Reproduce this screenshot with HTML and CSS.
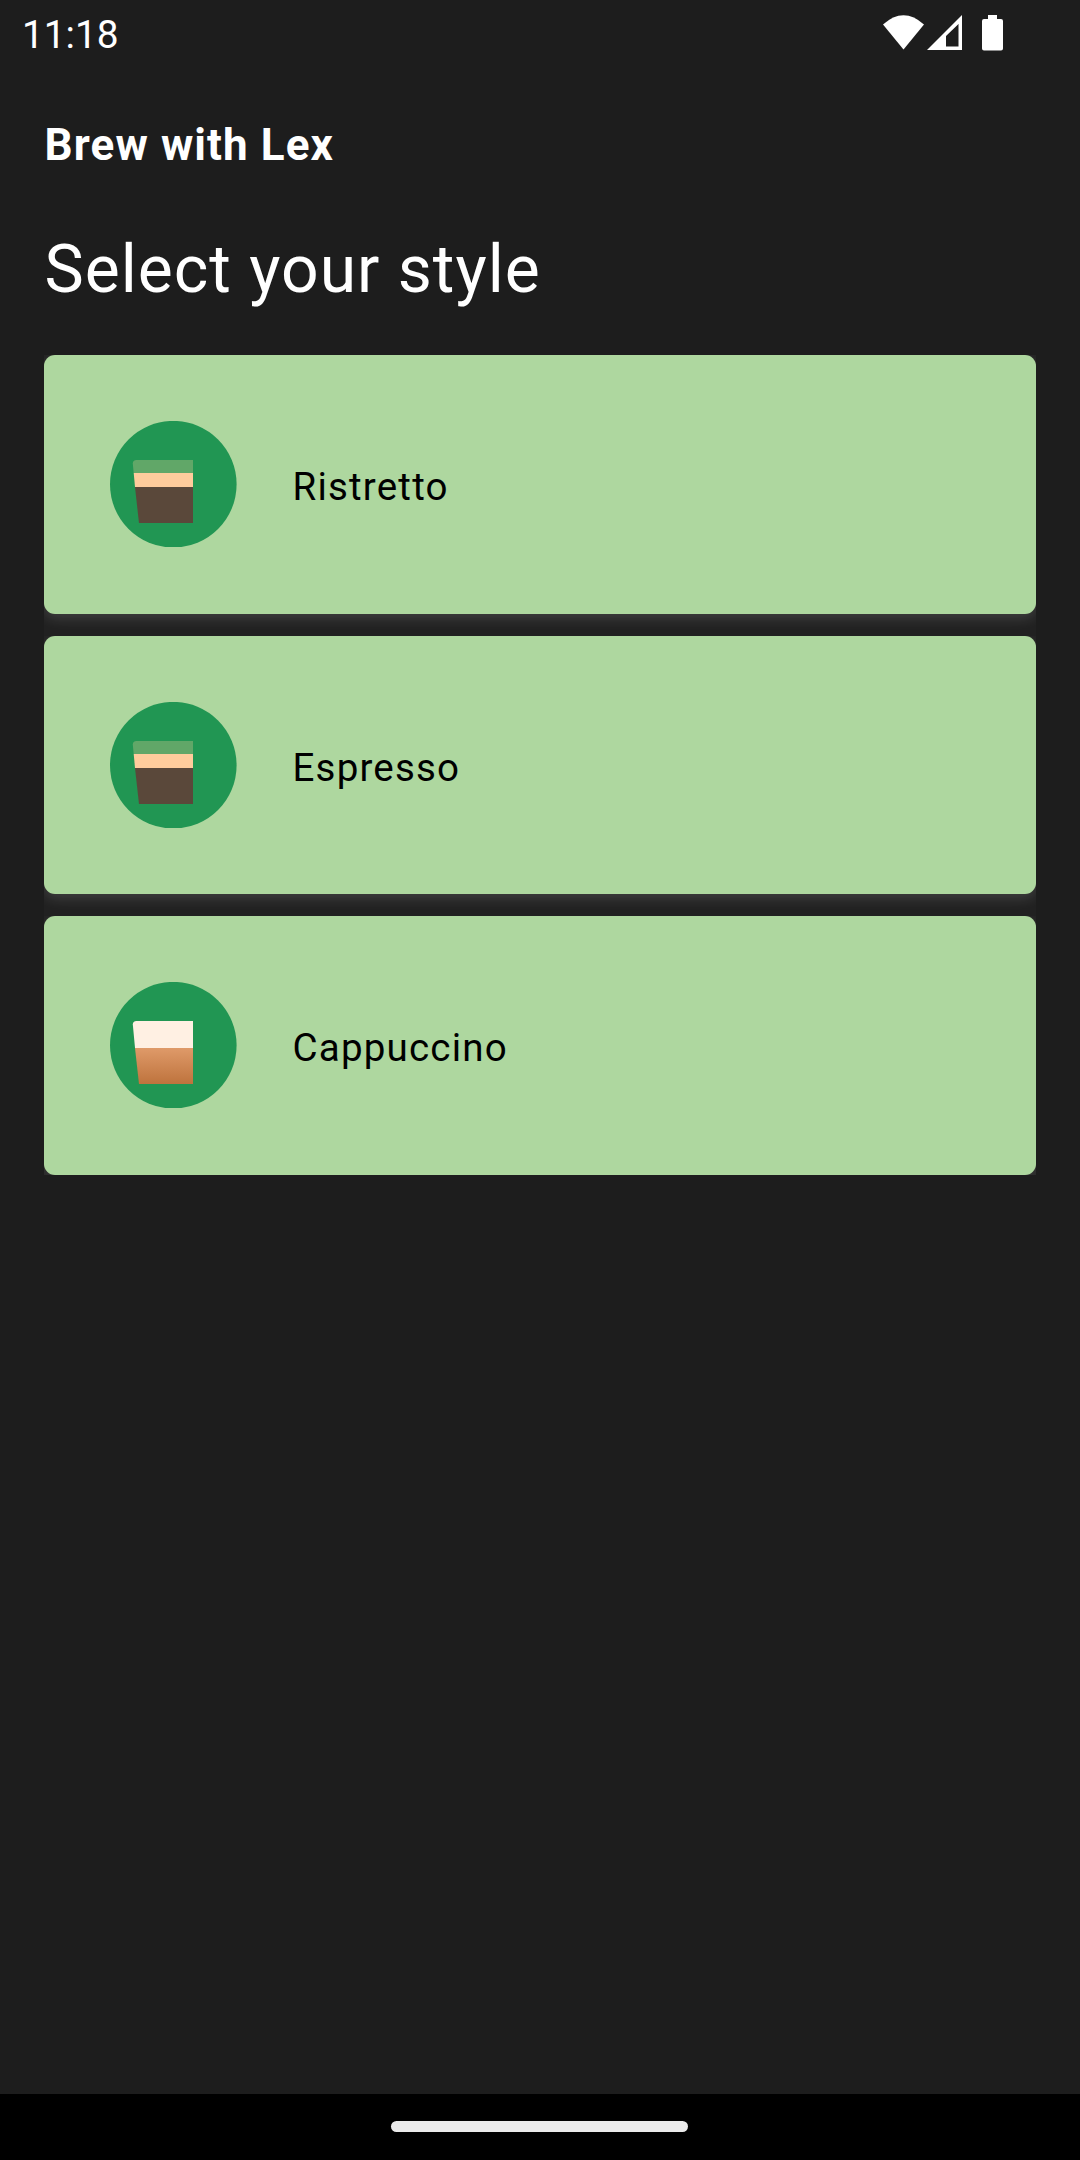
FILE: index.html
```html
<!DOCTYPE html>
<html lang="en">
<head>
<meta charset="utf-8">
<title>Brew with Lex</title>
<link rel="stylesheet" href="styles.css">
</head>
<body>
<div class="screen">
  <header class="status-bar">
    <span class="clock">11:18</span>
    <svg class="status-icons" width="124" height="40" viewBox="880 13 124 40" fill="#fff">
      <path d="M883 24.5Q903.5 6 924 24.5L903.5 49.5Z"/>
      <path fill-rule="evenodd" d="M962 15V50H927ZM958.5 24L946 36V46.5H958.5Z"/>
      <path d="M988 15h9v4h4a2 2 0 0 1 2 2v27.500a2 2 0 0 1-2 2h-17a2 2 0 0 1-2-2v-27.500a2 2 0 0 1 2-2h4z"/>
    </svg>
  </header>
  <main class="content">
    <div class="app-name">Brew with Lex</div>
    <h1 class="heading">Select your style</h1>
    <ul class="styles">
      <li class="card-slot"><div class="card">
        <svg class="cup" width="127" height="126" viewBox="0 0 127 126">
          <circle cx="63.300" cy="63.200" r="63.300" fill="#219653"/>
          <path d="M26.500 39H83V52H23.700L22.800 42.500Q22.800 39 26.500 39Z" fill="#61a768"/>
          <path d="M23.700 52H83V66H25Z" fill="#ffcc9c"/>
          <path d="M25 66H83V102H29Z" fill="#5a483a"/>
        </svg>
        <span class="label">Ristretto</span>
      </div></li>
      <li class="card-slot"><div class="card">
        <svg class="cup" width="127" height="126" viewBox="0 0 127 126">
          <circle cx="63.300" cy="63.200" r="63.300" fill="#219653"/>
          <path d="M26.500 39H83V52H23.700L22.800 42.500Q22.800 39 26.500 39Z" fill="#61a768"/>
          <path d="M23.700 52H83V66H25Z" fill="#ffcc9c"/>
          <path d="M25 66H83V102H29Z" fill="#5a483a"/>
        </svg>
        <span class="label">Espresso</span>
      </div></li>
      <li class="card-slot"><div class="card">
        <svg class="cup" width="127" height="126" viewBox="0 0 127 126">
          <defs><linearGradient id="coffee" x1="0" y1="0" x2="0" y2="1">
            <stop offset="0" stop-color="#df9a69"/><stop offset="1" stop-color="#be733d"/>
          </linearGradient></defs>
          <circle cx="63.300" cy="63.200" r="63.300" fill="#219653"/>
          <path d="M26.500 39H83V66H25L22.800 42.500Q22.800 39 26.500 39Z" fill="#fff0e3"/>
          <path d="M25 66H83V102H29Z" fill="url(#coffee)"/>
        </svg>
        <span class="label">Cappuccino</span>
      </div></li>
    </ul>
  </main>
  <footer class="nav-bar"><div class="handle"></div></footer>
</div>
</body>
</html>
```
FILE: styles.css
```css
body {
  margin: 0;
  background: #1d1d1d;
  font-family: Roboto, "Liberation Sans", sans-serif;
}
.screen {
  width: 1080px;
  height: 2160px;
  display: flex;
  flex-direction: column;
  background: #1d1d1d;
  color: #fff;
}
.status-bar {
  box-sizing: border-box;
  height: 66px;
  padding: 13px 76px 0 22px;
  display: flex;
  justify-content: space-between;
  align-items: flex-start;
}
.clock {
  font-size: 38.8px;
  line-height: 43px;
}
.status-icons {
  display: block;
}
.content {
  flex: 1;
  padding: 54px 44px 0;
}
.app-name {
  padding-left: 0.6px;
  font-size: 44px;
  font-weight: 700;
  line-height: 50px;
  letter-spacing: 1.100px;
}
.heading {
  margin: 60px 0 0;
  padding-left: 0.5px;
  font-size: 66px;
  font-weight: 400;
  line-height: 80px;
  letter-spacing: 1px;
}
.styles {
  margin: 45.2px 0 0;
  padding: 0;
  list-style: none;
  display: flex;
  flex-direction: column;
}
/* Each slot clips its card's glow to the list row. */
.card-slot {
  overflow: hidden;
  height: 280.5px;
  background: #212121;
}
.card-slot:last-child {
  height: 258.5px;
}
.card {
  box-sizing: border-box;
  height: 258.5px;
  padding-left: 66px;
  display: flex;
  align-items: center;
  background: #aed79f;
  border-radius: 11px;
  box-shadow: 0 4px 14px rgba(255, 255, 255, 0.15);
}
.cup {
  display: block;
  flex: none;
}
.label {
  margin-left: 55.5px;
  padding-top: 6px;
  color: #000;
  font-size: 38.5px;
  line-height: 44px;
  letter-spacing: 1.2px;
}
.nav-bar {
  height: 66px;
  display: flex;
  align-items: center;
  justify-content: center;
  background: #000;
}
.handle {
  width: 297px;
  height: 11px;
  margin: 0 1px 1px 0;
  border-radius: 6px;
  background: #ebebeb;
}
```
